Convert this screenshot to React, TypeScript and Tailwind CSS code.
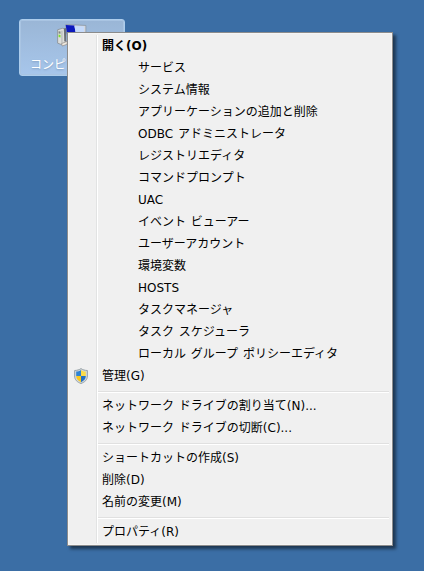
type MenuItem = {
  label: string
  bold?: boolean
  indent?: boolean
  shield?: boolean
}

const groups: MenuItem[][] = [
  [
    { label: '開く(O)', bold: true },
    { label: 'サービス', indent: true },
    { label: 'システム情報', indent: true },
    { label: 'アプリーケーションの追加と削除', indent: true },
    { label: 'ODBC アドミニストレータ', indent: true },
    { label: 'レジストリエディタ', indent: true },
    { label: 'コマンドプロンプト', indent: true },
    { label: 'UAC', indent: true },
    { label: 'イベント ビューアー', indent: true },
    { label: 'ユーザーアカウント', indent: true },
    { label: '環境変数', indent: true },
    { label: 'HOSTS', indent: true },
    { label: 'タスクマネージャ', indent: true },
    { label: 'タスク スケジューラ', indent: true },
    { label: 'ローカル グループ ポリシーエディタ', indent: true },
    { label: '管理(G)', shield: true },
  ],
  [{ label: 'ネットワーク ドライブの割り当て(N)...' }, { label: 'ネットワーク ドライブの切断(C)...' }],
  [{ label: 'ショートカットの作成(S)' }, { label: '削除(D)' }, { label: '名前の変更(M)' }],
  [{ label: 'プロパティ(R)' }],
]

function ShieldIcon() {
  return (
    <svg width="14" height="16" viewBox="0 0 14 16" aria-hidden="true">
      <defs>
        <clipPath id="shield">
          <path d="M7 2C5.600 3 4 3.500 2.200 3.600V8c0 3 2 4.900 4.800 6.200C9.800 12.900 11.800 11 11.800 8V3.600C10 3.500 8.400 3 7 2Z" />
        </clipPath>
      </defs>
      <path
        d="M7 .6C5.300 1.800 3.200 2.400.6 2.500V8c0 3.800 2.500 6.100 6.400 7.500C10.900 14.100 13.400 11.800 13.400 8V2.500C10.800 2.400 8.700 1.800 7 .6Z"
        fill="#d3d9dc"
        stroke="#8f9a9f"
        strokeWidth="0.9"
      />
      <g clipPath="url(#shield)">
        <path d="M1 1h6v7H1z" fill="#2f83d3" />
        <path d="M7 1h6v7H7z" fill="#fddc48" />
        <path d="M1 8h6v8H1z" fill="#fbc91d" />
        <path d="M7 8h6v8H7z" fill="#2471c4" />
      </g>
    </svg>
  )
}

function ComputerIcon() {
  return (
    <svg width="32" height="24" viewBox="0 0 32 24" aria-hidden="true">
      <path d="M1 6l5-1.500 3 .5v15l-4 1.500L1 20z" fill="#dddedb" stroke="#858a8f" strokeWidth="0.8" />
      <path d="M5.500 7v14" stroke="#a5a8a8" strokeWidth="0.8" />
      <path d="M2 7.500l2 .3v2.500L2 10z" fill="#7d877f" />
      <path d="M2 11l2 .5v2.500L2 13.500z" fill="#7be02c" />
      <path d="M7.500 5l2.500-1v14H8z" fill="#6b6f77" />
      <path d="M9.500 .5l21 1v17.500L12 18z" fill="#d4d8de" stroke="#8794a4" strokeWidth="0.8" />
      <path d="M9.500 1l9 .5 3 16-10-1z" fill="#0b18bd" />
      <path d="M18.500 2l10 .5v14l-7.500-.8z" fill="#c5dafb" />
      <path d="M5 20.500l6-2.500v3l-5 2z" fill="#eee9df" stroke="#8e8784" strokeWidth="0.7" />
    </svg>
  )
}

function MenuRow({ label, bold, indent, shield }: MenuItem) {
  return (
    <li className="flex h-[22px] items-center">
      <span className="flex w-8 shrink-0 items-center pl-1">{shield ? <ShieldIcon /> : null}</span>
      <span className={`whitespace-pre ${indent ? 'pl-9' : ''} ${bold ? 'font-bold' : ''}`}>{label}</span>
    </li>
  )
}

export default function App() {
  return (
    <div className="relative h-[571px] w-[424px] overflow-hidden bg-[#3b6ea5] font-['DejaVu_Sans','Noto_Sans_CJK_JP',sans-serif] text-xs leading-[22px] text-black [word-spacing:1px]">
      {/* selected desktop icon */}
      <div className="absolute top-[19px] left-[19px] flex h-[57px] w-[106px] flex-col items-center rounded-[3px] border border-[#adcdec] bg-linear-to-b from-[#9ab6d6] to-[#a7c6eb] pt-1 shadow-[inset_0_0_0_1px_#a9c4e2]">
        <ComputerIcon />
        <span className="mt-2 leading-5 text-white [text-shadow:0_1px_2px_#7d9cc0]">コンピューター</span>
      </div>

      {/* context menu */}
      <div className="absolute top-8 left-[67px] h-[514px] w-[326px] border border-[#8c8c8c] bg-[#f0f0f0] p-0.5 shadow-[inset_0_0_0_1px_#f5f5f5,3px_3px_3px_rgba(0,0,0,0.5)]">
        <div className="absolute top-0.5 bottom-0.5 left-7 w-0.5 border-r border-l border-r-white border-l-[#e2e3e3]" />
        {groups.map((items, index) => (
          <div key={index}>
            {index > 0 ? (
              <div className="h-2 pt-1 pr-px pl-7">
                <div className="h-0.5 w-full border-t border-b border-t-[#e0e0e0] border-b-white" />
              </div>
            ) : null}
            <ul>
              {items.map((item) => (
                <MenuRow key={item.label} {...item} />
              ))}
            </ul>
          </div>
        ))}
      </div>
    </div>
  )
}
